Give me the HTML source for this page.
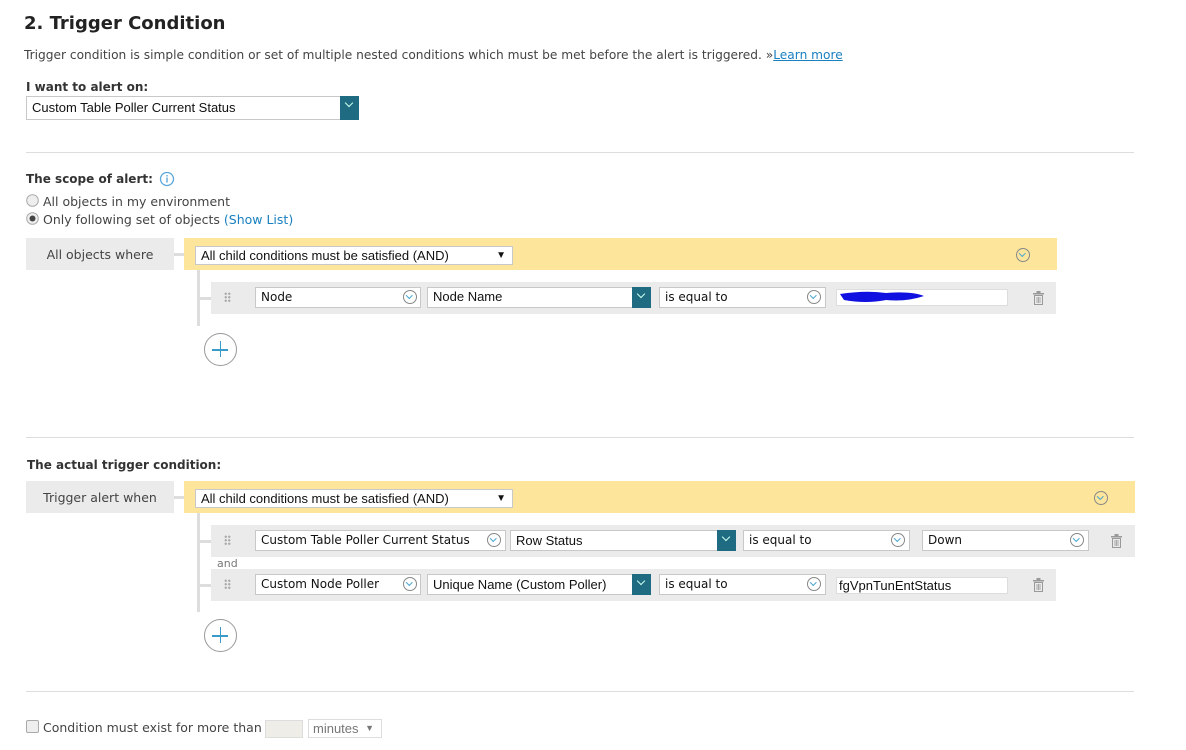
<!DOCTYPE html>
<html><head><meta charset="utf-8"><style>
*{margin:0;padding:0;box-sizing:border-box}
body{width:1186px;height:750px;background:#fff;position:relative;overflow:hidden;font-family:"DejaVu Sans","Liberation Sans",sans-serif;color:#333;font-size:12.5px}
.a{position:absolute;white-space:nowrap}
.sel{position:absolute;background:#fff;border:1px solid #c8c8c8;font-family:"Liberation Sans",sans-serif;font-size:13px;color:#111;padding-left:5px;line-height:19px}
.btn{position:absolute;top:-1px;right:-1px;bottom:-1px;width:19px;background:#1f6b82}
.btn:after{content:"";position:absolute;left:6px;top:4px;width:5px;height:5px;border-right:1.5px solid #cfe;border-bottom:1.5px solid #cfe;transform:rotate(45deg)}
.cv{position:absolute;width:14px;height:14px;border:1.3px solid #888;border-radius:50%}
.cv:after{content:"";position:absolute;left:3.3px;top:2.3px;width:3.5px;height:3.5px;border-right:1.5px solid #4aa6d2;border-bottom:1.5px solid #4aa6d2;transform:rotate(45deg)}
.gray{position:absolute;background:#ebebeb}
.yel{position:absolute;background:#fde59c}
.hr{position:absolute;left:26px;width:1108px;height:1px;background:#ddd}
.dots{position:absolute;width:7px;height:10px;background:radial-gradient(circle,#aaa 1px,transparent 1.3px) 0 0/3.5px 3.5px}
.plus{position:absolute;width:33px;height:33px;border:1.5px solid #999;border-radius:50%}
.plus:before{content:"";position:absolute;left:7px;top:15px;width:16px;height:1.5px;background:#3a9ac8}
.plus:after{content:"";position:absolute;left:14.5px;top:7px;width:1.5px;height:16px;background:#3a9ac8}
.vl{position:absolute;width:3px;background:#ddd}
.hl{position:absolute;height:3px;background:#ddd}
.lbl{position:absolute;background:#ebebeb;color:#444;font-size:12.5px;text-align:center;line-height:34px}
.dj{font-family:"DejaVu Sans",sans-serif;font-size:12px}
</style></head><body>
<div class="a" style="left:24px;top:13px;font-size:18px;font-weight:bold;color:#222">2. Trigger Condition</div>
<div class="a" style="left:24px;top:48px;font-size:12.2px;color:#444">Trigger condition is simple condition or set of multiple nested conditions which must be met before the alert is triggered. »<span style="color:#1a80c0;text-decoration:underline">Learn more</span></div>
<div class="a" style="left:26px;top:80px;font-weight:bold;color:#333;font-size:12px">I want to alert on:</div>
<div class="sel" style="left:26px;top:96px;width:333px;height:24px;line-height:22px;font-size:13px">Custom Table Poller Current Status<div class="btn"></div></div>
<div class="hr" style="top:152px"></div>
<div class="a" style="left:26px;top:172px;font-weight:bold;color:#333;font-size:12px">The scope of alert:</div>
<svg class="a" style="left:159px;top:171px" width="16" height="16"><circle cx="8" cy="8" r="6.5" fill="none" stroke="#5aa8db" stroke-width="1.3"/><rect x="7.3" y="4" width="1.4" height="1.5" fill="#5aa8db"/><rect x="7.3" y="6.5" width="1.4" height="5" fill="#5aa8db"/></svg>
<svg class="a" style="left:26px;top:194px" width="13" height="13"><circle cx="6.5" cy="6.5" r="5.8" fill="#eee" stroke="#aaa"/></svg>
<div class="a" style="left:43px;top:194px;color:#444">All objects in my environment</div>
<svg class="a" style="left:26px;top:212px" width="13" height="13"><circle cx="6.5" cy="6.5" r="5.8" fill="#eee" stroke="#aaa"/><circle cx="6.5" cy="6.5" r="3" fill="#444"/></svg>
<div class="a" style="left:43px;top:212px;color:#444">Only following set of objects <span style="color:#1a80c0">(Show List)</span></div>

<div class="lbl" style="left:26px;top:238px;width:148px;height:32px">All objects where</div>
<div class="hl" style="left:174px;top:253px;width:10px"></div>
<div class="yel" style="left:184px;top:238px;width:873px;height:32px"></div>
<div class="sel" style="left:195px;top:246px;width:318px;height:19px;line-height:17px">All child conditions must be satisfied (AND)<span style="position:absolute;right:6px;font-size:10px">▼</span></div>
<div class="cv" style="left:1016px;top:248px"></div>
<div class="vl" style="left:197px;top:270px;height:56px"></div>
<div class="hl" style="left:200px;top:297px;width:11px"></div>
<div class="gray" style="left:211px;top:282px;width:845px;height:32px"></div>
<div class="dots" style="left:224px;top:292px"></div>
<div class="sel dj" style="left:255px;top:287px;width:166px;height:21px">Node<div class="cv" style="left:147px;top:2px"></div></div>
<div class="sel" style="left:427px;top:287px;width:224px;height:21px;line-height:17px">Node Name<div class="btn"></div></div>
<div class="sel dj" style="left:659px;top:287px;width:167px;height:21px">is equal to<div class="cv" style="left:147px;top:2px"></div></div>
<div class="sel" style="left:836px;top:289px;width:172px;height:17px;border-color:#ddd"></div>
<svg class="a" style="left:836px;top:288px" width="92" height="20"><path d="M4 6 Q30 2 50 5 Q75 3 88 8 Q70 14 50 12 Q30 16 8 12 Z" fill="#1010e0"/></svg>
<svg class="a" style="left:1032px;top:291px" width="13" height="14"><rect x="1" y="2" width="11" height="1.5" fill="#999"/><rect x="4.5" y="0" width="4" height="2" fill="#999"/><path d="M2.5 4.5h8v9h-8z" fill="none" stroke="#999"/><path d="M5 6v6M6.5 6v6M8 6v6" stroke="#999" stroke-width=".8"/></svg>
<div class="plus" style="left:204px;top:333px"></div>

<div class="hr" style="top:437px"></div>
<div class="a" style="left:27px;top:458px;font-weight:bold;color:#333;font-size:12px">The actual trigger condition:</div>
<div class="lbl" style="left:26px;top:481px;width:148px;height:32px">Trigger alert when</div>
<div class="hl" style="left:174px;top:496px;width:10px"></div>
<div class="yel" style="left:184px;top:481px;width:951px;height:32px"></div>
<div class="sel" style="left:195px;top:489px;width:318px;height:19px;line-height:17px">All child conditions must be satisfied (AND)<span style="position:absolute;right:6px;font-size:10px">▼</span></div>
<div class="cv" style="left:1094px;top:491px"></div>
<div class="vl" style="left:197px;top:513px;height:99px"></div>
<div class="hl" style="left:200px;top:540px;width:11px"></div>
<div class="gray" style="left:211px;top:525px;width:924px;height:32px"></div>
<div class="dots" style="left:224px;top:535px"></div>
<div class="sel dj" style="left:255px;top:530px;width:251px;height:21px">Custom Table Poller Current Status<div class="cv" style="left:231px;top:2px"></div></div>
<div class="sel" style="left:510px;top:530px;width:226px;height:21px">Row Status<div class="btn"></div></div>
<div class="sel dj" style="left:743px;top:530px;width:167px;height:21px">is equal to<div class="cv" style="left:147px;top:2px"></div></div>
<div class="sel dj" style="left:922px;top:530px;width:167px;height:21px">Down<div class="cv" style="left:147px;top:2px"></div></div>
<svg class="a" style="left:1110px;top:534px" width="13" height="14"><rect x="1" y="2" width="11" height="1.5" fill="#999"/><rect x="4.5" y="0" width="4" height="2" fill="#999"/><path d="M2.5 4.5h8v9h-8z" fill="none" stroke="#999"/><path d="M5 6v6M6.5 6v6M8 6v6" stroke="#999" stroke-width=".8"/></svg>
<div class="a" style="left:217px;top:557px;font-size:11px;color:#777">and</div>
<div class="hl" style="left:200px;top:584px;width:11px"></div>
<div class="gray" style="left:211px;top:569px;width:845px;height:32px"></div>
<div class="dots" style="left:224px;top:579px"></div>
<div class="sel dj" style="left:255px;top:574px;width:166px;height:21px">Custom Node Poller<div class="cv" style="left:147px;top:2px"></div></div>
<div class="sel" style="left:427px;top:574px;width:224px;height:21px">Unique Name (Custom Poller)<div class="btn"></div></div>
<div class="sel dj" style="left:659px;top:574px;width:167px;height:21px">is equal to<div class="cv" style="left:147px;top:2px"></div></div>
<div class="sel" style="left:836px;top:577px;width:172px;height:17px;line-height:15px;padding-left:2px;border-color:#ddd">fgVpnTunEntStatus</div>
<svg class="a" style="left:1032px;top:578px" width="13" height="14"><rect x="1" y="2" width="11" height="1.5" fill="#999"/><rect x="4.5" y="0" width="4" height="2" fill="#999"/><path d="M2.5 4.5h8v9h-8z" fill="none" stroke="#999"/><path d="M5 6v6M6.5 6v6M8 6v6" stroke="#999" stroke-width=".8"/></svg>
<div class="plus" style="left:204px;top:619px"></div>

<div class="hr" style="top:691px"></div>
<div class="a" style="left:26px;top:720px;width:13px;height:13px;border:1px solid #aaa;border-radius:2px;background:#eee"></div>
<div class="a" style="left:43px;top:720px;color:#444">Condition must exist for more than</div>
<div class="a" style="left:265px;top:720px;width:38px;height:18px;background:#eeede8;border:1px solid #ddd"></div>
<div class="a" style="left:308px;top:719px;width:74px;height:19px;border:1px solid #ddd;font-family:'Liberation Sans',sans-serif;font-size:13px;color:#777;padding-left:4px;line-height:17px">minutes <span style="position:absolute;right:7px;font-size:9px">▼</span></div>
</body></html>
